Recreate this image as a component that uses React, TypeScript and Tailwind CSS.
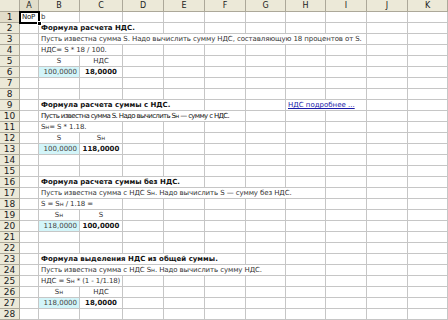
import type { ReactNode } from 'react';

type Cell = { col: number; span?: number; text?: ReactNode; cls?: string };

const LETTERS = ['A', 'B', 'C', 'D', 'E', 'F', 'G', 'H', 'I', 'J', 'K'];

const SPAN: Record<number, string> = {
  1: 'col-span-1',
  2: 'col-span-2',
  3: 'col-span-3',
  4: 'col-span-4',
  5: 'col-span-5',
  6: 'col-span-6',
  7: 'col-span-7',
  8: 'col-span-8',
};

const Sn = () => (
  <>
    S<span className="text-[6px]">н</span>
  </>
);

const title = 'bg-white font-bold text-[#111] pl-[2px]';
const plain = 'bg-white pl-[2px] tracking-[-0.1px]';
const center = 'bg-white text-center';
const cyan = 'bg-[#d3f5f9] text-right pr-[2px] text-[#444]';
const bold = 'bg-white font-bold text-center text-[#111]';

// A = 1, B = 2, C = 3 ...
const rows: Record<number, Cell[]> = {
  1: [{ col: 2, text: 'b', cls: 'bg-white pl-[2px]' }],
  2: [{ col: 2, span: 3, text: 'Формула расчета НДС.', cls: title }],
  3: [{ col: 2, span: 8, text: 'Пусть известна сумма S. Надо вычислить сумму НДС, составляющую 18 процентов от S.', cls: plain }],
  4: [{ col: 2, span: 2, text: 'НДС= S * 18 / 100.', cls: plain }],
  5: [
    { col: 2, text: 'S', cls: center },
    { col: 3, text: 'НДС', cls: center },
  ],
  6: [
    { col: 2, text: '100,0000', cls: cyan },
    { col: 3, text: '18,0000', cls: bold },
  ],
  9: [
    { col: 2, span: 4, text: 'Формула расчета суммы с НДС.', cls: title },
    { col: 8, span: 2, text: 'НДС подробнее ...', cls: 'bg-white pl-[2px] text-[#1a1aa8] underline' },
  ],
  10: [
    {
      col: 2,
      span: 5,
      text: (
        <>
          Пусть известна сумма S. Надо вычислить S<span className="text-[6px]">н</span> — сумму с НДС.
        </>
      ),
      cls: 'bg-white pl-[2px] tracking-[-0.65px] text-[#111]',
    },
  ],
  11: [{ col: 2, span: 2, text: <><Sn />= S * 1.18.</>, cls: plain }],
  12: [
    { col: 2, text: 'S', cls: center },
    { col: 3, text: <Sn />, cls: center },
  ],
  13: [
    { col: 2, text: '100,0000', cls: cyan },
    { col: 3, text: '118,0000', cls: bold },
  ],
  16: [{ col: 2, span: 4, text: 'Формула расчета суммы без НДС.', cls: title }],
  17: [
    {
      col: 2,
      span: 7,
      text: <>Пусть известна сумма с НДС <Sn />. Надо вычислить S — сумму без НДС.</>,
      cls: plain,
    },
  ],
  18: [{ col: 2, span: 2, text: <>S = <Sn /> / 1.18 =</>, cls: plain }],
  19: [
    { col: 2, text: <Sn />, cls: center },
    { col: 3, text: 'S', cls: center },
  ],
  20: [
    { col: 2, text: '118,0000', cls: cyan },
    { col: 3, text: '100,0000', cls: bold },
  ],
  23: [{ col: 2, span: 5, text: 'Формула выделения НДС из общей суммы.', cls: title }],
  24: [
    {
      col: 2,
      span: 6,
      text: <>Пусть известна сумма с НДС <Sn />. Надо вычислить сумму НДС.</>,
      cls: plain,
    },
  ],
  25: [{ col: 2, span: 2, text: <>НДС = <Sn /> * (1 - 1/1.18)</>, cls: plain }],
  26: [
    { col: 2, text: <Sn />, cls: center },
    { col: 3, text: 'НДС', cls: center },
  ],
  27: [
    { col: 2, text: '118,0000', cls: cyan },
    { col: 3, text: '18,0000', cls: bold },
  ],
};

function Row({ n }: { n: number }) {
  const defs = rows[n] ?? [];
  const out: ReactNode[] = [];
  let c = 1;
  while (c <= LETTERS.length) {
    const d = defs.find((x) => x.col === c);
    if (d) {
      const span = d.span ?? 1;
      out.push(
        <div
          key={c}
          className={`${SPAN[span]} h-[11px] border-r border-b border-[#c6c6c6] whitespace-nowrap leading-[10px] ${d.cls ?? ''}`}
        >
          {d.text}
        </div>
      );
      c += span;
    } else {
      out.push(<div key={c} className="h-[11px] border-r border-b border-[#c6c6c6] bg-white" />);
      c += 1;
    }
  }
  return (
    <>
      <div
        className={`h-[11px] border-r border-b border-[#aca899] text-center text-[9px] leading-[10px] text-[#222] ${
          n === 1 ? 'bg-[#e2ddca]' : 'bg-[#ece9d8]'
        }`}
      >
        {n}
      </div>
      {out}
    </>
  );
}

export default function App() {
  const nums = Array.from({ length: 28 }, (_, i) => i + 1);
  return (
    <div className="w-[448px] h-[320px] overflow-hidden bg-white font-['DejaVu_Sans',sans-serif] text-[7px] text-[#333]">
      <div className="relative grid grid-cols-[20px_19px_41px_43px_41px_41px_41px_40px_40px_41px_41px_40px]">
        <div className="h-[12px] bg-[#ece9d8] border-r border-b border-[#aca899]" />
        {LETTERS.map((l) => (
          <div
            key={l}
            className={`h-[12px] border-r border-b border-[#aca899] text-center text-[8px] leading-[11px] text-[#222] ${
              l === 'A' ? 'bg-[#e2ddca]' : 'bg-[#ece9d8]'
            }`}
          >
            {l}
          </div>
        ))}
        {nums.map((n) => (
          <Row key={n} n={n} />
        ))}

        {/* active cell A1 */}
        <div className="absolute left-[19px] top-[11px] w-[21px] h-[13px] border-2 border-black bg-white text-[7px] leading-[9px] pl-[1px] tracking-[-0.3px] text-[#111]">
          NoP
        </div>
        <div className="absolute left-[37px] top-[21px] w-[5px] h-[5px] bg-black border border-white" />
      </div>
    </div>
  );
}
